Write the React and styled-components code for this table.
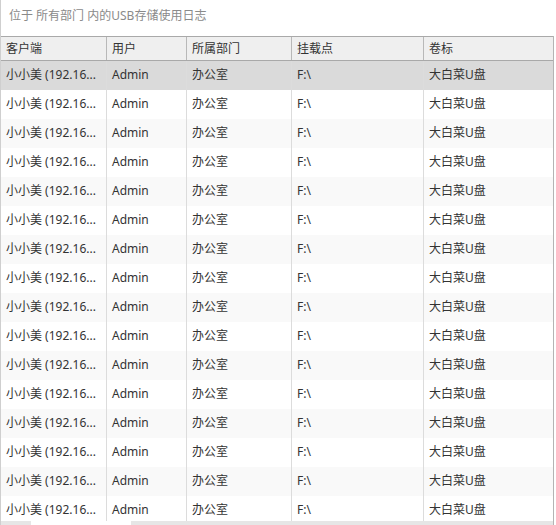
import React from 'react'
import styled, { createGlobalStyle } from 'styled-components';

const GlobalStyle = createGlobalStyle`
    html, body {
        margin: 0;
        padding: 0;
        background: #fff;
    }
    body {
        font-family: "Noto Sans", "Noto Sans CJK SC", sans-serif;
        font-size: 12px;
        color: #333;
    }
`;

const columns = [
    { key: 'client', title: '客户端', width: '106px' },
    { key: 'user', title: '用户', width: '80px' },
    { key: 'dept', title: '所属部门', width: '105px' },
    { key: 'mount', title: '挂载点', width: '132px' },
    { key: 'label', title: '卷标', width: '130px' },
];

const rows = Array.from({ length: 16 }, () => ({
    client: '小小美 (192.16...',
    user: 'Admin',
    dept: '办公室',
    mount: 'F:\\',
    label: '大白菜U盘',
}));

const template = columns.map(c => c.width).join(' ');

function App() {
    return (
        <Panel>
            <GlobalStyle />
            <Caption>位于 所有部门 内的USB存储使用日志</Caption>
            <Table>
                <HeaderRow>
                    {columns.map(c => (
                        <HeaderCell key={c.key}>{c.title}</HeaderCell>
                    ))}
                </HeaderRow>
                <Body>
                    {rows.map((r, i) => (
                        <Row key={i} $selected={i === 0} $striped={i % 2 === 0}>
                            {columns.map(c => (
                                <Cell key={c.key}>{r[c.key]}</Cell>
                            ))}
                        </Row>
                    ))}
                </Body>
                <ScrollBar>
                    <Thumb />
                </ScrollBar>
            </Table>
        </Panel>
    )
}

const Panel = styled.div`
    width: 556px;
    height: 525px;
    display: flex;
    flex-direction: column;
    overflow: hidden;
`;

const Caption = styled.div`
    height: 36px;
    line-height: 32px;
    padding-left: 8px;
    color: #8a8a8a;
    font-size: 12px;
    border-left: 1px solid #cfcfcf;
    box-sizing: border-box;
`;

const Table = styled.div`
    flex: 1;
    width: 554px;
    display: flex;
    flex-direction: column;
    border-left: 1px solid #cfcfcf;
    border-right: 1px solid #b4b4b4;
    box-sizing: border-box;
    min-height: 0;
`;

const HeaderRow = styled.div`
    display: grid;
    grid-template-columns: ${template};
    height: 25px;
    background: #efefef;
    border-top: 1px solid #a9a9a9;
    border-bottom: 1px solid #a9a9a9;
    box-sizing: border-box;
`;

const HeaderCell = styled.div`
    padding-left: 5px;
    line-height: 23px;
    border-right: 1px solid #b8b8b8;
    white-space: nowrap;
    overflow: hidden;
    &:last-child {
        border-right: none;
    }
`;

const Body = styled.div`
    flex: 1;
    overflow: hidden;
    min-height: 0;
`;

const Row = styled.div`
    display: grid;
    grid-template-columns: ${template};
    height: 29px;
    background: ${p => p.$selected ? '#dadada' : p.$striped ? '#f9f9f9' : '#fff'};
`;

const Cell = styled.div`
    padding-left: 5px;
    line-height: 27px;
    border-right: 1px solid #dcdcdc;
    white-space: nowrap;
    overflow: hidden;
    &:first-child {
        padding-left: 5px;
    }
    &:last-child {
        border-right: none;
    }
`;

const ScrollBar = styled.div`
    height: 4px;
    background: #e6e6e6;
    padding-left: 30px;
    flex-shrink: 0;
`;

const Thumb = styled.div`
    width: 100px;
    height: 100%;
    background: #fff;
`;

export default App;
